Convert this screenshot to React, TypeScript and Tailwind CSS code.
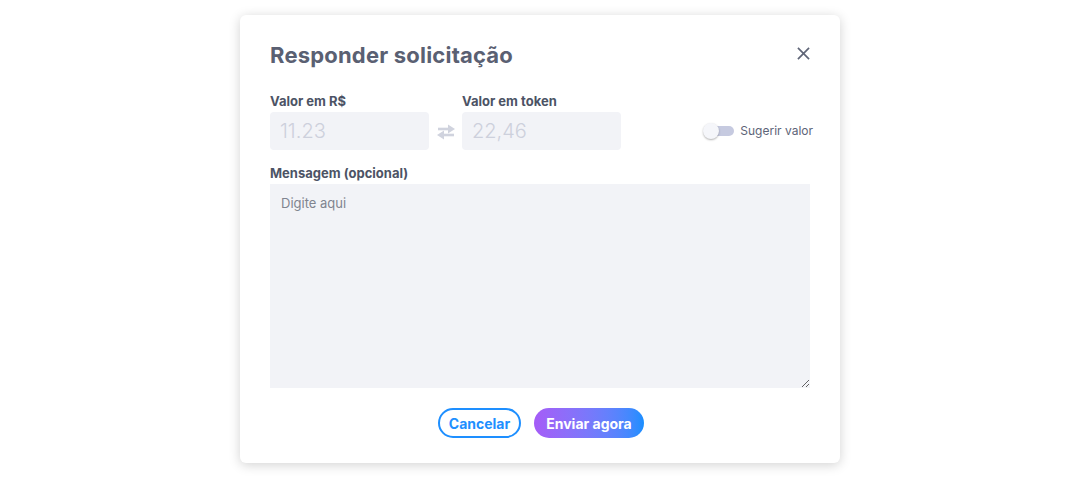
import { useState } from "react";

function SwapIcon() {
  return (
    <svg width="20" height="18" viewBox="0 0 20 18" fill="none">
      <path d="M2 6h11" stroke="#d0d3de" strokeWidth="2.6" />
      <path d="M12 1.5l7 4.5-7 4.5z" fill="#d0d3de" />
      <path d="M18 12H7" stroke="#d0d3de" strokeWidth="2.6" />
      <path d="M8 7.5L1 12l7 4.5z" fill="#d0d3de" />
    </svg>
  );
}

export default function App() {
  const [msg, setMsg] = useState("");
  const [suggest, setSuggest] = useState(false);

  return (
    <div
      className="w-[1080px] h-[480px] bg-white flex justify-center pt-[15px]"
      style={{ fontFamily: "Inter, 'Noto Sans', sans-serif" }}
    >
      <div className="w-[600px] h-[448px] bg-white rounded-md shadow-[0_2px_12px_rgba(0,0,0,0.18)] px-[30px] pt-[27px] flex flex-col">
        <div className="flex items-center justify-between h-[26px]">
          <h1 className="text-[22px] font-bold text-[#5a6072] tracking-[0.2px]">
            Responder solicitação
          </h1>
          <button className="text-[#5f6577] mr-[0px] -mt-[4px]">
            <svg width="13" height="13" viewBox="0 0 14 14">
              <path d="M1 1l12 12M13 1L1 13" stroke="currentColor" strokeWidth="1.8" />
            </svg>
          </button>
        </div>

        <div className="flex items-end mt-[25px]">
          <div className="flex flex-col">
            <label className="text-[13px] font-bold text-[#4c5365] leading-[16px]">Valor em R$</label>
            <input
              defaultValue=""
              placeholder="11.23"
              className="mt-[3px] w-[159px] h-[38px] rounded bg-[#f2f3f7] px-[10px] text-[20px] text-[#5a6072] placeholder:text-[#cdd0dc] outline-none font-light"
            />
          </div>
          <div className="w-[33px] h-[38px] flex items-center justify-center pt-[2px]">
            <SwapIcon />
          </div>
          <div className="flex flex-col">
            <label className="text-[13px] font-bold text-[#4c5365] leading-[16px]">Valor em token</label>
            <input
              defaultValue=""
              placeholder="22,46"
              className="mt-[3px] w-[159px] h-[38px] rounded bg-[#f2f3f7] px-[10px] text-[20px] text-[#5a6072] placeholder:text-[#cdd0dc] outline-none font-light"
            />
          </div>
          <div className="flex-1" />
          <button
            onClick={() => setSuggest(!suggest)}
            className="flex items-center h-[38px] -mr-[3px]"
          >
            <span className="relative w-[31px] h-[16px] flex items-center">
              <span className="absolute left-[3px] right-0 h-[10px] rounded-full bg-[#c6cae0]" />
              <span
                className={
                  suggest
                    ? "absolute left-[15px] w-[16px] h-[16px] rounded-full bg-white shadow-[0_1px_2px_rgba(0,0,0,0.3)]"
                    : "absolute left-0 w-[16px] h-[16px] rounded-full bg-[#f5f6fa] shadow-[0_1px_2px_rgba(0,0,0,0.3)]"
                }
              />
            </span>
            <span className="ml-[6px] text-[12px] text-[#5d6478]">Sugerir valor</span>
          </button>
        </div>

        <label className="mt-[15px] text-[13px] font-bold text-[#4c5365] leading-[16px]">
          Mensagem (opcional)
        </label>
        <textarea
          value={msg}
          onChange={(e) => setMsg(e.target.value)}
          placeholder="Digite aqui"
          className="mt-[3px] w-[540px] h-[204px] bg-[#f2f3f7] px-[11px] py-[10px] text-[13px] text-[#4c5365] placeholder:text-[#80848f] outline-none"
        />

        <div className="flex justify-center gap-[13px] mt-[20px] pl-[2px]">
          <button className="w-[83px] h-[30px] rounded-full border-2 border-[#1e8fff] text-[#1e8fff] text-[14px] font-bold">
            Cancelar
          </button>
          <button className="w-[110px] h-[30px] rounded-full bg-gradient-to-r from-[#a55cf7] to-[#168eff] text-white text-[14px] font-bold">
            Enviar agora
          </button>
        </div>
      </div>
    </div>
  );
}
